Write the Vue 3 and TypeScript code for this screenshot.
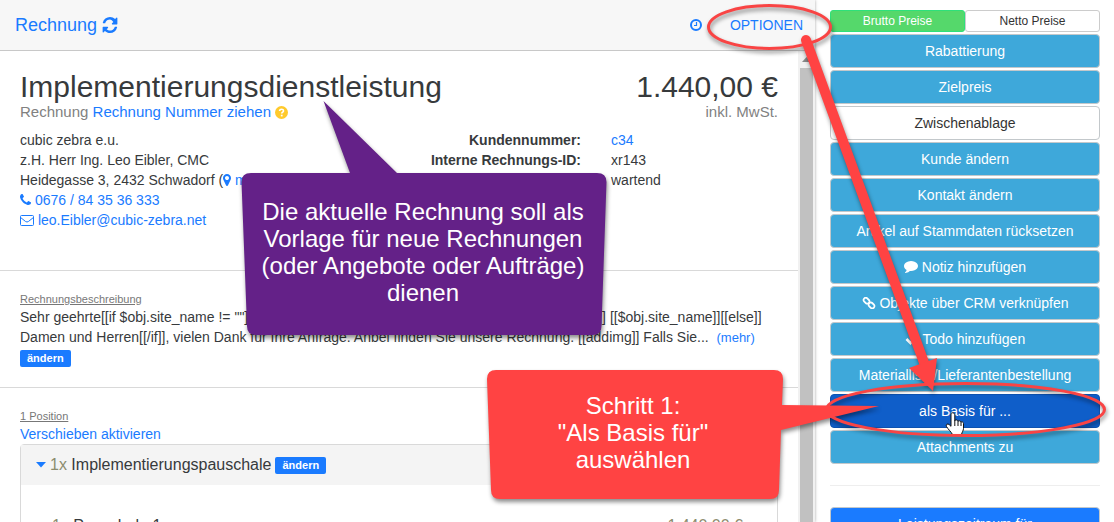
<script setup lang="ts">
import { ref } from 'vue'

interface Action {
  label: string
  kind?: 'plain' | 'active'
  icon?: 'comment' | 'link' | 'check'
}

const brutto = ref(true)

const actions: Action[] = [
  { label: 'Rabattierung' },
  { label: 'Zielpreis' },
  { label: 'Zwischenablage', kind: 'plain' },
  { label: 'Kunde ändern' },
  { label: 'Kontakt ändern' },
  { label: 'Artikel auf Stammdaten rücksetzen' },
  { label: 'Notiz hinzufügen', icon: 'comment' },
  { label: 'Objekte über CRM verknüpfen', icon: 'link' },
  { label: 'Todo hinzufügen', icon: 'check' },
  { label: 'Materialliste/Lieferantenbestellung' },
  { label: 'als Basis für ...', kind: 'active' },
  { label: 'Attachments zu' },
]

const description =
  'Sehr geehrte[[if $obj.site_name != ""]][[if $obj.gender == "m"]]r Herr[[else]] Frau[[/if]] [[$obj.title]] [[$obj.site_name]][[else]]'
const description2 =
  'Damen und Herren[[/if]], vielen Dank für Ihre Anfrage. Anbei finden Sie unsere Rechnung. [[addimg]] Falls Sie...'
</script>

<template>
  <div class="page">
    <section class="document">
      <header class="topbar">
        <a href="#" class="crumb">
          Rechnung
          <svg class="refresh" viewBox="0 0 1536 1664" aria-hidden="true">
            <path d="M1511 1056q0 5-1 7-64 268-268 434.5T764 1664q-146 0-282.5-55T238 1452l-129 129q-19 19-45 19t-45-19-19-45v-448q0-26 19-45t45-19h448q26 0 45 19t19 45-19 45l-137 137q71 66 161 102t187 36q134 0 250-65t186-179q11-17 53-117 8-23 30-23h192q13 0 22.5 9.5t9.5 22.5zm25-800v448q0 26-19 45t-45 19h-448q-26 0-45-19t-19-45 19-45l138-138Q969 256 768 256q-134 0-250 65T332 500q-11 17-53 117-8 23-30 23H50q-13 0-22.5-9.5T18 608v-7q65-268 270-434.5T768 0q146 0 284 55.5T1297 212l130-129q19-19 45-19t45 19 19 45z" />
          </svg>
        </a>
        <nav class="tools">
          <a href="#" aria-label="Verlauf">
            <svg class="clock" viewBox="0 0 12 12" aria-hidden="true">
              <circle cx="6" cy="6" r="5" fill="none" stroke="currentColor" stroke-width="2" />
              <path d="M6.500 3v3.500H4" fill="none" stroke="currentColor" stroke-width="1.200" />
            </svg>
          </a>
          <a href="#">OPTIONEN</a>
        </nav>
      </header>

      <div class="body">
        <main class="content">
          <section class="block intro">
            <div class="headline">
              <div>
                <h1>Implementierungsdienstleistung</h1>
                <p class="sub">
                  Rechnung <a href="#">Rechnung Nummer ziehen</a>
                  <svg class="help" viewBox="0 0 13 13" aria-hidden="true">
                    <circle cx="6.5" cy="6.5" r="6.5" fill="#ffca2c" />
                    <path d="M4.6 5.1c0-2.5 3.9-2.4 3.9-.2 0 1.3-1.8 1.3-1.8 2.7" fill="none" stroke="#fff" stroke-width="1.6" />
                    <path d="M5.8 8.7h1.8v1.7H5.8z" fill="#fff" />
                  </svg>
                </p>
              </div>
              <div class="total">
                <strong>1.440,00 €</strong>
                <p class="sub">inkl. MwSt.</p>
              </div>
            </div>
            <div class="facts">
              <address>
                cubic zebra e.u.<br />
                z.H. Herr Ing. Leo Eibler, CMC<br />
                Heidegasse 3, 2432 Schwadorf (<a href="#"><svg class="pin" viewBox="0 0 1024 1536" aria-hidden="true"><path d="M768 512q0-106-75-181t-181-75-181 75-75 181 75 181 181 75 181-75 75-181zm256 0q0 109-33 179l-364 774q-16 33-47.5 52t-67.5 19-67.5-19-46.5-52L33 691Q0 621 0 512q0-212 150-362T512 0t362 150 150 362z" /></svg> map</a>)<br />
                <a href="#"><svg class="phone" viewBox="0 0 1408 1408" aria-hidden="true"><path d="M1408 1112q0 27-10 70.5t-21 68.5q-21 50-122 106-94 51-186 51-27 0-53-3.5t-57.5-12.5-47-14.5-55.5-20.5-49-18q-98-35-175-83-127-79-264-216t-216-264q-48-77-83-175-3-9-18-49t-20.5-55.5-14.5-47-12.5-57.5T0 339q0-92 51-186Q107 52 157 31q25-11 68.5-21T296 0q14 0 21 3 18 6 53 76 11 19 30 54t35 63.5 31 53.5q3 4 17.5 25t21.5 35.5 7 28.5q0 20-28.5 50t-62 55-62 53-28.5 46q0 9 5 22.5t8.5 20.5 14 24 11.5 19q76 137 174 235t235 174q2 1 19 11.5t24 14 20.5 8.5 22.5 5q18 0 46-28.5t53-62 55-62 50-28.5q14 0 28.5 7t35.5 21.5 25 17.5q25 15 53.5 31t63.5 35 54 30q70 35 76 53 3 7 3 21z" /></svg> 0676 / 84 35 36 333</a><br />
                <a href="#"><svg class="mail" viewBox="0 0 14 11" aria-hidden="true"><rect x=".5" y=".5" width="13" height="10" rx="1" fill="none" stroke="currentColor" /><path d="M.7 2.6 5.6 6.5q1.4 1 2.8 0l4.9-3.9" fill="none" stroke="currentColor" /></svg> leo.Eibler@cubic-zebra.net</a>
              </address>
              <dl>
                <dt>Kundennummer:</dt>
                <dd><a href="#">c34</a></dd>
                <dt>Interne Rechnungs-ID:</dt>
                <dd>xr143</dd>
                <dt>Status:</dt>
                <dd>wartend</dd>
              </dl>
            </div>
          </section>

          <section class="block">
            <h2>Rechnungsbeschreibung</h2>
            <p class="line">{{ description }}</p>
            <p class="line">{{ description2 }} &nbsp;<a href="#" class="more">(mehr)</a></p>
            <button type="button" class="badge spaced">ändern</button>
          </section>

          <section class="block positions">
            <h2>1 Position</h2>
            <p class="line"><a href="#">Verschieben aktivieren</a></p>
            <article class="card">
              <h3>
                <svg class="caret" viewBox="0 0 10 6" aria-hidden="true"><path d="M0 0h10L5 5.5z" /></svg>
                <span><span class="qty">1x</span> Implementierungspauschale</span>
                <button type="button" class="badge">ändern</button>
              </h3>
              <div class="row">
                <span><span class="qty">1x</span> Pauschale 1</span>
                <span class="amount">1.440,00 €</span>
              </div>
            </article>
          </section>
        </main>
        <div class="scrollbar" aria-hidden="true">
          <svg viewBox="0 0 17 17"><path d="M4 11h9L8.500 6z" fill="#8a8a8a" /></svg>
          <div class="thumb"></div>
        </div>
      </div>
    </section>

    <aside class="sidebar">
      <div class="toggle">
        <button type="button" :class="{ on: brutto }" @click="brutto = true">Brutto Preise</button>
        <button type="button" :class="{ on: !brutto }" @click="brutto = false">Netto Preise</button>
      </div>
      <button v-for="action in actions" :key="action.label" type="button" class="action" :class="action.kind">
        <svg v-if="action.icon === 'comment'" class="glyph" viewBox="0 256 1792 1536" aria-hidden="true"><path d="M1792 896q0 174-120 321.500t-326 233-450 85.500q-70 0-145-8-198 175-460 242-49 14-114 22-17 2-30.500-9t-17.500-29v-1q-3-4-.5-12t2-10 4.500-9.500l6-9 7-8.500 8-9q7-8 31-34.500t34.500-38 31-39.500 32.500-51 27-59 26-76q-157-89-247.500-220T0 896q0-130 71-248.500t191-204.500 286-136.500 348-50.500q244 0 450 85.500t326 233T1792 896z" /></svg>
        <svg v-else-if="action.icon === 'link'" class="glyph" viewBox="0 0 14 12" aria-hidden="true">
          <g fill="none" stroke="currentColor" stroke-width="1.8">
            <rect x="-3.200" y="-2.200" width="6.400" height="4.400" rx="2" transform="translate(4.500 3.700) rotate(45)" />
            <rect x="-3.200" y="-2.200" width="6.400" height="4.400" rx="2" transform="translate(9.500 8.400) rotate(45)" />
          </g>
        </svg>
        <svg v-else-if="action.icon === 'check'" class="glyph" viewBox="0 0 14 12" aria-hidden="true"><path d="m1.500 6 4 4 7-8" fill="none" stroke="currentColor" stroke-width="2.600" /></svg>
        {{ action.label }}
      </button>
      <hr />
      <button type="button" class="action primary">Leistungszeitraum für<br />Positionen setzen</button>
    </aside>

    <div class="annotations">
      <svg class="shapes" viewBox="0 0 1114 522" aria-hidden="true">
        <path class="cursor" d="M951 413.500c1.500-1.500 3.800-.5 3.800 1.500v5.500c1-1 3-.6 3.200.7 1-.8 2.600-.4 2.900.8 1.200-.5 2.600.2 2.600 1.500v5c0 2-1.500 3.500-2 6h-9c-1.500-3-4.500-5.200-6-8-1-2 1.200-3.300 2.600-2l1.900 1.800z" />
        <path class="fingers" d="M954.800 420v6M958 421v5M961 422v4" />
        <g class="shadowed">
          <ellipse class="ring" cx="769.500" cy="27" rx="61" ry="21.500" />
          <ellipse class="ring" cx="965.500" cy="409.500" rx="139" ry="26" />
          <path class="shaft" d="M806 40 926 368" />
          <path class="red" d="m909 368 28-10-4 33z" />
          <path class="red" d="M496 370h278q9 0 9 9l-1 26 97 1-98 24-2 60q0 9-9 9H500q-9 0-9-9l-4-111q0-9 9-9z" />
          <path class="purple" d="M251 173h99l-26.500-72L397 173h200q9.500 0 9.500 9l-5 144q0 9-9 9H256q-9 0-9-9l-5.500-144q0-9 9.500-9z" />
        </g>
      </svg>
      <p class="note note-purple">Die aktuelle Rechnung soll als<br />Vorlage für neue Rechnungen<br />(oder Angebote oder Aufträge)<br />dienen</p>
      <p class="note note-red">Schritt 1:<br />"Als Basis für"<br />auswählen</p>
    </div>
  </div>
</template>

<style>
body {
  margin: 0;
  overflow: hidden;
}
</style>

<style scoped>
.page {
  position: relative;
  display: flex;
  height: 100vh;
  overflow: hidden;
  background: #fff;
  color: #373a3c;
  font: 14px/20px "Liberation Sans", Arial, sans-serif;
}
a {
  color: #1a7bff;
  text-decoration: none;
}
svg {
  fill: currentColor;
}
h1, h2, h3, p, dl, dd {
  margin: 0;
}
button {
  font-family: inherit;
  cursor: pointer;
}
.document {
  flex: 1;
  min-width: 0;
  display: flex;
  flex-direction: column;
  box-shadow: 0 0 3px rgba(0, 0, 0, 0.35);
}
.topbar {
  display: flex;
  align-items: center;
  justify-content: space-between;
  height: 50px;
  padding: 0 12px 0 15px;
  background: #f7f7f7;
  border-bottom: 1px solid #c8c8c8;
}
.crumb {
  display: flex;
  align-items: center;
  gap: 5px;
  font-size: 18px;
}
.refresh {
  width: 16px;
  height: 16px;
}
.tools {
  display: flex;
  align-items: center;
  gap: 28px;
}
.clock {
  display: block;
  width: 12px;
  height: 12px;
}
.body {
  flex: 1;
  min-height: 0;
  display: flex;
}
.content {
  flex: 1;
  min-width: 0;
  overflow: hidden;
}
.scrollbar {
  width: 17px;
  display: flex;
  flex-direction: column;
  background: #f1f1f1;
}
.scrollbar svg {
  width: 17px;
  height: 17px;
  flex: none;
}
.thumb {
  flex: 1;
  margin: 0 2px;
  background: #c1c1c1;
}
.block {
  padding: 20px;
  border-bottom: 1px solid #d9d9d9;
}
.intro {
  padding-bottom: 40px;
}
.headline {
  display: flex;
  justify-content: space-between;
}
h1,
.total strong {
  font-size: 30px;
  line-height: 32px;
  font-weight: 400;
}
.sub {
  color: #818181;
  font-size: 15px;
  line-height: 18px;
}
.total {
  text-align: right;
}
.help {
  width: 13px;
  height: 13px;
  margin-left: 4px;
  vertical-align: -2px;
}
.facts {
  display: flex;
  margin-top: 9px;
}
address {
  flex: 1;
  font-style: normal;
}
dl {
  display: grid;
  grid-template-columns: auto 167px;
  grid-auto-rows: 20px;
  column-gap: 30px;
}
dt {
  font-weight: 700;
  text-align: right;
}
.pin {
  width: 8px;
  height: 12px;
  vertical-align: -1px;
}
.phone {
  width: 11px;
  height: 11px;
}
.mail {
  width: 14px;
  height: 11px;
  vertical-align: -1px;
}
h2 {
  color: #777;
  font-size: 11px;
  line-height: 16px;
  font-weight: 400;
  text-decoration: underline;
}
.line {
  white-space: nowrap;
}
.more {
  font-size: 13px;
}
.badge {
  display: block;
  height: 17px;
  padding: 0 7px;
  border: 0;
  border-radius: 2px;
  background: #1a7bff;
  color: #fff;
  font-size: 11px;
  line-height: 17px;
  font-weight: 700;
}
.spaced {
  margin-top: 2px;
}
.positions {
  border-bottom: 0;
}
.card {
  border: 1px solid #d9d9d9;
  border-radius: 4px;
}
h3 {
  display: flex;
  align-items: center;
  gap: 4px;
  height: 40px;
  padding: 0 15px;
  background: #f4f4f4;
  font-size: 16px;
  font-weight: 400;
}
.caret {
  width: 10px;
  height: 6px;
  color: #1a7bff;
}
.qty,
.amount {
  color: #8c8c6e;
}
.row {
  display: flex;
  justify-content: space-between;
  padding: 31px 34px 20px 31px;
  font-size: 16px;
}
.sidebar {
  box-sizing: border-box;
  width: 299px;
  padding: 10px 14px 0 15px;
  display: flex;
  flex-direction: column;
  gap: 2px;
}
.toggle {
  display: flex;
}
.toggle button {
  flex: 1;
  height: 22px;
  padding: 0;
  border: 1px solid #ccc;
  border-radius: 3px;
  background: #fff;
  color: #333;
  font-size: 12px;
}
.toggle .on {
  border-color: #2fe07a;
  background: #55d86b;
  color: #fff;
}
.action {
  flex: none;
  min-height: 34px;
  padding: 6px;
  border: 1px solid #c3c8cb;
  border-radius: 4px;
  background: #3ea8da;
  color: #fff;
  font-size: 14px;
  line-height: 20px;
}
.plain {
  background: #fff;
  color: #333;
}
.active {
  border-color: #0d52b0;
  background: #0f5ec9;
}
.primary {
  background: #1a7bff;
}
.glyph {
  width: 14px;
  height: 12px;
  vertical-align: -1px;
}
hr {
  width: 100%;
  margin: 19px 0;
  border: 0;
  border-top: 1px solid #eee;
}
.annotations {
  position: absolute;
  top: 0;
  left: 0;
  width: 1114px;
  height: 522px;
  pointer-events: none;
}
.shapes {
  display: block;
  width: 100%;
  height: 100%;
}
.shadowed {
  filter: drop-shadow(1px 3px 2px rgba(0, 0, 0, 0.45));
}
.ring {
  fill: none;
  stroke: #f94444;
  stroke-width: 3;
}
.shaft {
  stroke: #ff4343;
  stroke-width: 10;
  stroke-linecap: round;
}
.red {
  fill: #ff4343;
}
.purple {
  fill: #642188;
}
.cursor {
  fill: #fff;
  stroke: #111;
}
.fingers {
  stroke: #111;
}
.note {
  position: absolute;
  color: #fff;
  font-size: 24px;
  line-height: 27px;
  text-align: center;
  white-space: nowrap;
}
.note-purple {
  top: 198px;
  left: 242px;
  width: 362px;
}
.note-red {
  top: 392px;
  left: 487px;
  width: 292px;
}
</style>
